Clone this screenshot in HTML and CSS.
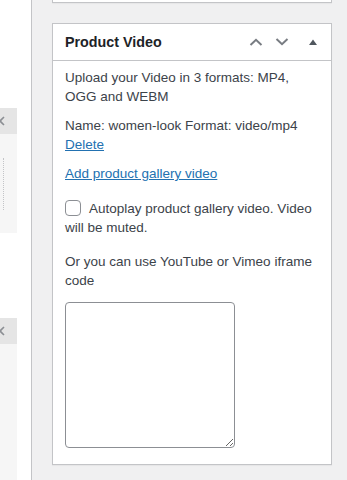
FILE: index.html
```html
<!DOCTYPE html>
<html lang="en">

<head>
    <meta charset="UTF-8">
    <meta name="viewport" content="width=device-width, initial-scale=1.0">
    <title>Product Video</title>
    <link rel="stylesheet" href="styles.css">
</head>

<body>
    <div class="screen">
        <!-- Painel lateral cortado -->
        <div class="side">
            <div class="side-box side-box-first">
                <div class="side-head">
                    <svg class="side-close" width="6" height="10" viewBox="0 0 6 10">
                        <path d="M-4,1 L4,9 M-4,9 L4,1" />
                    </svg>
                </div>
                <div class="side-body"><div class="side-dots"></div></div>
            </div>
            <div class="side-box side-box-second">
                <div class="side-head">
                    <svg class="side-close" width="6" height="10" viewBox="0 0 6 10">
                        <path d="M-4,1 L4,9 M-4,9 L4,1" />
                    </svg>
                </div>
                <div class="side-body"></div>
            </div>
        </div>

        <!-- Coluna de metaboxes -->
        <div class="column">
            <div class="postbox postbox-stub"></div>

            <div class="postbox">
                <div class="postbox-header">
                    <h2>Product Video</h2>
                    <div class="handle-actions">
                        <svg class="handle" width="14" height="8" viewBox="0 0 14 8">
                            <polyline points="1.5,7 7,1.8 12.5,7" />
                        </svg>
                        <svg class="handle" width="14" height="8" viewBox="0 0 14 8">
                            <polyline points="1.5,1 7,6.2 12.5,1" />
                        </svg>
                        <svg class="toggle" width="8" height="6" viewBox="0 0 8 6">
                            <polygon points="0,6 4,0.5 8,6" />
                        </svg>
                    </div>
                </div>

                <div class="inside">
                    <p class="intro">Upload your Video in 3 formats: MP4, OGG and WEBM</p>
                    <p class="file-info">Name: women-look Format: video/mp4<br><a href="#">Delete</a></p>
                    <p class="add-link"><a href="#">Add product gallery video</a></p>
                    <p class="autoplay">
                        <label><input type="checkbox" class="check"> Autoplay product gallery video. Video will be muted.</label>
                    </p>
                    <p class="iframe-note">Or you can use YouTube or Vimeo iframe code</p>
                    <textarea class="iframe-code"></textarea>
                </div>
            </div>
        </div>
    </div>
</body>

</html>
```

FILE: styles.css
```css
/* Estilos Gerais */
body,
html {
    margin: 0;
    padding: 0;
    background-color: #fff;
    font-family: 'Liberation Sans', Arial, sans-serif;
    font-size: 13.5px;
    color: #3c434a;
}

.screen {
    display: flex;
    width: 347px;
    height: 480px;
    overflow: hidden;
}

/* Painel lateral */
.side {
    width: 31px;
    flex-shrink: 0;
}

.side-box {
    width: 17px;
}

.side-box-first {
    margin-top: 108px;
}

.side-box-second {
    margin-top: 85px;
}

.side-head {
    display: flex;
    align-items: center;
    height: 26px;
    background-color: #e5e5e5;
}

.side-close path {
    fill: none;
    stroke: #8c8f94;
    stroke-width: 1.6;
}

.side-body {
    height: 99px;
    background-color: #f6f6f6;
    padding-top: 24px;
    box-sizing: border-box;
}

.side-box-second .side-body {
    height: 140px;
}

.side-dots {
    margin-left: 3px;
    width: 0;
    height: 52px;
    border-left: 1px dotted #c3c4c7;
}

/* Coluna */
.column {
    flex: 1;
    background-color: #f0f0f1;
    border-left: 1px solid #c3c4c7;
    padding-left: 20px;
}

.postbox {
    width: 278px;
    background-color: #fff;
    border: 1px solid #c3c4c7;
    box-shadow: 0 1px 1px rgba(0, 0, 0, 0.04);
}

.postbox-stub {
    height: 2px;
    border-top: none;
    margin-bottom: 20px;
}

.postbox-header {
    display: flex;
    align-items: center;
    justify-content: space-between;
    height: 36px;
    border-bottom: 1px solid #c3c4c7;
    padding-left: 12px;
}

.postbox-header h2 {
    margin: 0;
    font-size: 14.3px;
    font-weight: bold;
    color: #1d2327;
}

.handle-actions {
    display: flex;
    align-items: center;
    gap: 12px;
    padding-right: 14px;
}

.handle polyline {
    fill: none;
    stroke: #787c82;
    stroke-width: 2;
}

.toggle {
    margin-left: 8px;
}

.toggle polygon {
    fill: #50575e;
}

/* Conteúdo */
.inside {
    padding: 0 12px 16px;
    line-height: 18.5px;
}

.inside p {
    margin: 0;
}

.intro {
    padding-top: 8px;
}

.file-info {
    margin-top: 11px !important;
}

.add-link {
    margin-top: 11px !important;
}

.autoplay {
    margin-top: 15px !important;
    line-height: 19px;
}

.iframe-note {
    margin-top: 15px !important;
    line-height: 19px;
}

a {
    color: #2271b1;
}

.check {
    width: 16px;
    height: 16px;
    margin: 0 5px 0 0;
    vertical-align: -3px;
    appearance: none;
    border: 1px solid #8c8f94;
    border-radius: 4px;
    background-color: #fff;
}

.iframe-code {
    display: block;
    width: 170px;
    height: 146px;
    margin-top: 12px;
    box-sizing: border-box;
    border: 1px solid #8c8f94;
    border-radius: 4px;
    resize: both;
}
```
